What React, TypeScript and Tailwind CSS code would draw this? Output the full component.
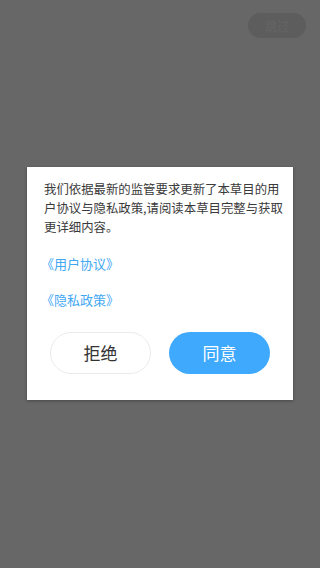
export default function App() {
  return (
    <div
      className="relative h-[568px] w-[320px] overflow-hidden bg-[#676767]"
      style={{ fontFamily: '"Noto Sans CJK SC", "Noto Sans", sans-serif' }}
    >
      {/* 跳过 */}
      <div className="absolute right-[14px] top-[13px] flex h-[25px] w-[58px] items-center justify-center rounded-full bg-[#5d5d5d] text-[12px] text-[#656565]">
        跳过
      </div>

      <div className="flex h-full items-start justify-center pt-[167px]">
        <div className="w-[266px] bg-white shadow-[0_1px_3px_rgba(0,0,0,0.3)]">
          <p className="pl-[17px] pr-[8px] pt-[13px] text-[12.4px] leading-[19px] text-[#3a3a3a]">
            我们依据最新的监管要求更新了本草目的用户协议与隐私政策,请阅读本草目完整与获取更详细内容。
          </p>
          <div className="mt-[17px] px-[14px] text-[13px] leading-[19px] text-[#42a7f2]">
            《用户协议》
          </div>
          <div className="mt-[17px] px-[14px] text-[13px] leading-[19px] text-[#42a7f2]">
            《隐私政策》
          </div>
          <div className="mt-[23px] flex justify-center gap-[18px] pb-[26px]">
            <button className="h-[42px] w-[101px] rounded-full border border-[#ebebeb] bg-white text-[17px] text-[#333]">
              拒绝
            </button>
            <button className="h-[42px] w-[101px] rounded-full bg-[#3ea9fd] text-[17px] text-white">
              同意
            </button>
          </div>
        </div>
      </div>
    </div>
  );
}
